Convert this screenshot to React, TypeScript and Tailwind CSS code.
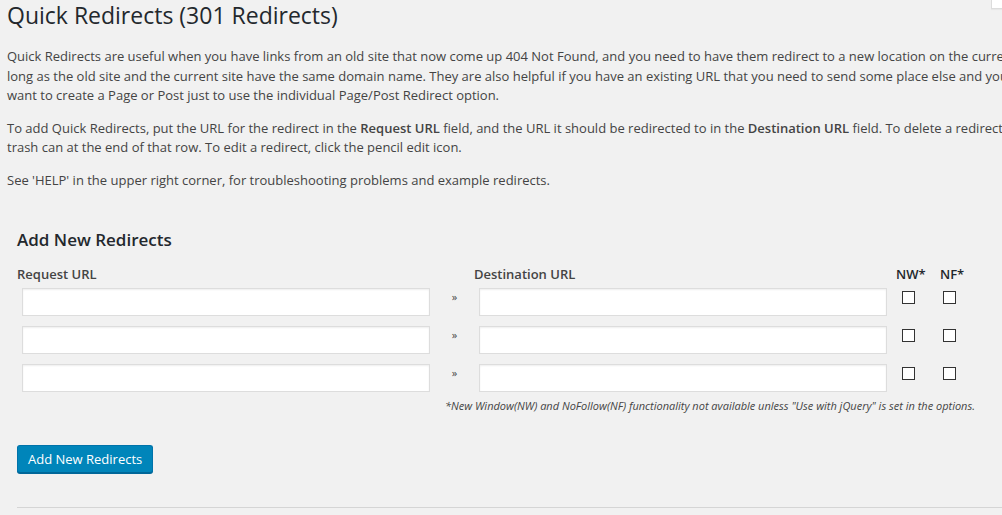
import React from 'react';

const font = { fontFamily: '"Open Sans", "Noto Sans", sans-serif' };

const rows = [0, 1, 2];

const UrlInput: React.FC = () => (
  <input
    type="text"
    className="block w-[408px] h-[28px] bg-white border border-[#dddddd] shadow-[inset_0_1px_2px_rgba(0,0,0,0.07)] outline-none px-2 text-[13px]"
  />
);

const Box: React.FC = () => (
  <span className="block w-[13px] h-[13px] bg-white border border-[#333333]" />
);

const App: React.FC = () => {
  return (
    <div
      className="relative h-[515px] w-full overflow-hidden bg-[#f1f1f1] text-[#444444] text-[13px] leading-[19.5px]"
      style={font}
    >
      {/* help tab peeking at the top right */}
      <div className="absolute right-0 top-0 w-[11px] h-[9px] bg-white border-l border-b border-[#dcdcdc] shadow-[0_1px_1px_rgba(0,0,0,0.04)]" />

      <div className="pl-[7px] whitespace-nowrap">
        <h2 className="text-[23px] leading-[29px] font-normal text-[#23282d] pt-[1px]">
          Quick Redirects (301 Redirects)
        </h2>

        <p className="mt-[17px]">
          Quick Redirects are useful when you have links from an old site that now come up 404 Not Found, and you need to have them redirect to a new location on the current site - as
          <br />
          long as the old site and the current site have the same domain name. They are also helpful if you have an existing URL that you need to send some place else and you don't
          <br />
          want to create a Page or Post just to use the individual Page/Post Redirect option.
        </p>
        <p className="mt-[13px]">
          To add Quick Redirects, put the URL for the redirect in the <strong className="font-semibold">Request URL</strong> field, and the URL it should be redirected to in the <strong className="font-semibold">Destination URL</strong> field. To delete a redirect, click the
          <br />
          trash can at the end of that row. To edit a redirect, click the pencil edit icon.
        </p>
        <p className="mt-[13px]">
          See 'HELP' in the upper right corner, for troubleshooting problems and example redirects.
        </p>
      </div>

      <div className="pl-[17px]">
        <h3 className="mt-[38px] text-[17px] leading-[24px] font-semibold text-[#23282d]">
          Add New Redirects
        </h3>

        <div className="mt-[12px] flex items-end font-semibold text-[#444444] h-[20px]">
          <div className="w-[457px]">Request URL</div>
          <div className="w-[422px]">Destination URL</div>
          <div className="w-[44px] text-[#23282d]">NW*</div>
          <div className="w-[40px] text-[#23282d]">NF*</div>
        </div>

        <div className="mt-[4px] flex flex-col gap-[10px]">
          {rows.map(r => (
            <div key={r} className="flex items-center h-[28px]">
              <div className="pl-[5px] w-[418px]">
                <UrlInput />
              </div>
              <div className="w-[39px] flex justify-center text-[11px] text-[#444444] -mt-[10px]">»</div>
              <div className="pl-[5px] w-[418px]">
                <UrlInput />
              </div>
              <div className="w-[40px] pl-[10px] -mt-[9px]">
                <Box />
              </div>
              <div className="w-[40px] pl-[11px] -mt-[9px]">
                <Box />
              </div>
            </div>
          ))}
        </div>

        <p className="mt-[6px] pl-[428px] whitespace-nowrap italic text-[11px] leading-[16px] text-[#444444]">
          *New Window(NW) and NoFollow(NF) functionality not available unless "Use with jQuery" is set in the options.
        </p>

        <button
          type="button"
          className="mt-[31px] h-[28px] px-[10px] rounded-[3px] bg-[#0085ba] border border-[#0073aa] border-b-[#006799] shadow-[0_1px_0_#006799] text-white text-[13px] leading-[26px]"
          style={font}
        >
          Add New Redirects
        </button>

        <div className="mt-[34px] h-px bg-[#d5d5d5]" />
      </div>
    </div>
  );
};

export default App;
